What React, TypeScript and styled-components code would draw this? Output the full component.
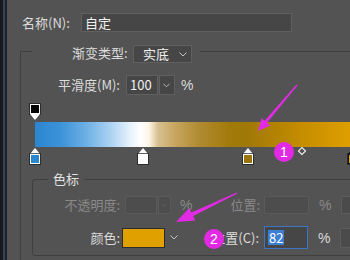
import React from 'react';
import styled, { createGlobalStyle } from 'styled-components';

const GlobalStyle = createGlobalStyle`
  html, body {
    margin: 0;
    padding: 0;
    background: #535353;
  }
  body {
    font-family: "Noto Sans CJK SC", "Liberation Sans", sans-serif;
    font-size: 13px;
    line-height: 16px;
    color: #dcdcdc;
    overflow: hidden;
  }
`;

const MAGENTA = '#e22ae4';
const LINE = '#3f3f3f';

const Screen = styled.div`
  position: relative;
  width: 350px;
  height: 260px;
  display: flex;
  overflow: hidden;
  background: #535353;
`;

const WindowEdge = styled.div`
  flex: none;
  width: 2px;
  background: #33475b;
  border-left: 3px solid #181a1e;
  border-right: 2px solid #1e2125;
`;

const Panel = styled.div`
  flex: 1;
  min-width: 0;
  display: flex;
  flex-direction: column;
`;

const Row = styled.div<{ $top: number; $left?: number; $h: number }>`
  display: flex;
  align-items: center;
  flex: none;
  height: ${p => p.$h}px;
  margin-top: ${p => p.$top}px;
  padding-left: ${p => p.$left ?? 0}px;
`;

const Label = styled.span<{ $w: number; $right?: boolean; $dim?: boolean; $gap?: number }>`
  flex: none;
  width: ${p => p.$w}px;
  margin-left: ${p => p.$gap ?? 0}px;
  padding-right: ${p => (p.$right ? 1 : 0)}px;
  box-sizing: border-box;
  text-align: ${p => (p.$right ? 'right' : 'left')};
  color: ${p => (p.$dim ? '#8a8a8a' : '#dcdcdc')};
  white-space: nowrap;
`;

const Field = styled.div<{ $w: number; $h: number; $gap?: number; $focus?: boolean; $dim?: boolean; $pad?: number }>`
  flex: none;
  display: flex;
  align-items: center;
  justify-content: space-between;
  box-sizing: border-box;
  width: ${p => p.$w}px;
  height: ${p => p.$h}px;
  margin-left: ${p => p.$gap ?? 0}px;
  padding: 0 4px 0 ${p => p.$pad ?? 3}px;
  background: ${p => (p.$dim ? '#4d4d4d' : '#464646')};
  border: 1px solid ${p => (p.$focus ? '#3a76c6' : p.$dim ? '#5a5a5a' : '#606060')};
  color: #f0f0f0;
  white-space: nowrap;
`;

const Selected = styled.span`
  background: #3a7fd2;
  color: #ffffff;
  padding: 0 1px;
  line-height: 15px;
`;

const Unit = styled.span<{ $gap: number; $dim?: boolean }>`
  flex: none;
  width: 12px;
  margin-left: ${p => p.$gap}px;
  color: ${p => (p.$dim ? '#8a8a8a' : '#dcdcdc')};
  font-family: "Liberation Sans", sans-serif;
  font-size: 14px;
`;

const Swatch = styled.div<{ $color: string }>`
  flex: none;
  width: 43px;
  height: 20px;
  margin-left: 1px;
  box-sizing: border-box;
  background: ${p => p.$color};
  border: 1px solid #2c2c2c;
`;

const ChevronCell = styled.div<{ $w: number; $gap: number }>`
  flex: none;
  display: flex;
  align-items: center;
  justify-content: center;
  width: ${p => p.$w}px;
  margin-left: ${p => p.$gap}px;
`;

const TypeGroup = styled.div`
  flex: 1;
  display: flex;
  flex-direction: column;
  margin: 13px 0 0 13px;
  min-width: 0;
`;

const GroupHead = styled.div`
  flex: none;
  display: flex;
  height: 18px;
`;

const Corner = styled.div`
  flex: none;
  width: 11px;
  height: 11px;
  margin-top: 6px;
  border-top: 1px solid ${LINE};
  border-left: 1px solid ${LINE};
`;

const HeadRule = styled.div`
  flex: 1;
  margin: 6px 0 0 8px;
  height: 0;
  border-top: 1px solid ${LINE};
`;

const GroupBody = styled.div`
  flex: 1;
  display: flex;
  flex-direction: column;
  border-left: 1px solid ${LINE};
`;

const Slider = styled.div`
  flex: none;
  display: flex;
  flex-direction: column;
  width: 318px;
  margin: 9px 0 0 14px;
`;

const Track = styled.div<{ $h: number }>`
  position: relative;
  height: ${p => p.$h}px;
`;

const GradientBar = styled.div`
  height: 25px;
  margin-top: 2px;
  background: linear-gradient(
    to right,
    #2b86d0 0px,
    #3c92d8 25px,
    #6aaee4 50px,
    #aad2f2 75px,
    #e6f2fc 95px,
    #ffffff 106px,
    #fdf5e6 114px,
    #d8c090 123px,
    #c6a660 140px,
    #b08a30 165px,
    #a27a0a 195px,
    #a07808 213px,
    #c48c00 265px,
    #e0a000 318px
  );
`;

const Stop = styled.div<{ $pos: number; $down?: boolean }>`
  position: absolute;
  left: ${p => p.$pos}%;
  top: ${p => (p.$down ? 0 : 1)}px;
  transform: translateX(-50%);
  display: flex;
  flex-direction: ${p => (p.$down ? 'column-reverse' : 'column')};
  align-items: center;
`;

const Tip = styled.div<{ $down?: boolean; $dark?: boolean }>`
  width: 0;
  height: 0;
  border-left: 5px solid transparent;
  border-right: 5px solid transparent;
  ${p => (p.$down ? 'border-top' : 'border-bottom')}: 6px solid ${p => (p.$dark ? '#111' : '#fff')};
`;

const StopBox = styled.div<{ $fill: string; $dark?: boolean }>`
  width: 10px;
  height: 10px;
  box-sizing: border-box;
  background: ${p => p.$fill};
  border: 1px solid ${p => (p.$dark ? '#111' : '#fff')};
  box-shadow: 0 0 0 1px rgba(30, 30, 30, 0.7);
`;

const Midpoint = styled.div<{ $pos: number }>`
  position: absolute;
  left: ${p => p.$pos}%;
  top: 1px;
  width: 4px;
  height: 4px;
  border: 1px solid #ffffff;
  transform: translateX(-50%) rotate(45deg);
`;

const StopGroup = styled.fieldset`
  flex: none;
  width: 340px;
  margin: 6px 0 0 11px;
  padding: 9px 0 6px 0;
  border: 1px solid ${LINE};
  border-radius: 3px;
  min-width: 0;
`;

const GroupTitle = styled.legend`
  margin-left: 15px;
  padding: 0 5px;
  line-height: 16px;
  color: #e2e2e2;
`;

const SideBox = styled.div<{ $h: number; $gap: number }>`
  flex: none;
  width: 30px;
  height: ${p => p.$h}px;
  margin-left: ${p => p.$gap}px;
  box-sizing: border-box;
  background: #4b4b4b;
  border: 1px solid #5c5c5c;
`;

const Notes = styled.svg`
  position: absolute;
  left: 0;
  top: 0;
  pointer-events: none;
`;

const Badge = styled.div<{ $x: number; $y: number }>`
  position: absolute;
  left: ${p => p.$x - 10}px;
  top: ${p => p.$y - 10}px;
  width: 20px;
  height: 20px;
  border-radius: 50%;
  background: ${MAGENTA};
  color: #ffffff;
  font-family: "Liberation Sans", sans-serif;
  font-size: 14px;
  line-height: 20px;
  text-align: center;
`;

const Chevron = ({ dim }: { dim?: boolean }) => (
  <svg width="8" height="5" viewBox="0 0 8 5">
    <polyline
      points="0.5,0.5 4,4 7.5,0.5"
      fill="none"
      stroke={dim ? '#6e6e6e' : '#c4c4c4'}
      strokeWidth="1"
    />
  </svg>
);

// positions in % of the gradient bar
const colorStops = [
  { pos: 0, fill: '#2b86d0' },
  { pos: 34, fill: '#ffffff' },
  { pos: 67, fill: '#9c740a' },
  { pos: 100, fill: '#e0a000', dark: true },
];

export default function App() {
  return (
    <Screen>
      <GlobalStyle />
      <WindowEdge />
      <Panel>
        <Row $top={13} $left={15} $h={19}>
          <Label $w={59}>名称(N):</Label>
          <Field $w={211} $h={19}>自定</Field>
        </Row>

        <TypeGroup>
          <GroupHead>
            <Corner />
            <Label $w={55} $gap={40}>渐变类型:</Label>
            <Field $w={59} $h={18} $gap={6} $pad={9}>
              实底
              <Chevron />
            </Field>
            <HeadRule />
          </GroupHead>

          <GroupBody>
            <Row $top={12} $left={37} $h={20}>
              <Label $w={68}>平滑度(M):</Label>
              <Field $w={32} $h={20}>100</Field>
              <Field $w={16} $h={20} $gap={1} $pad={3}>
                <Chevron />
              </Field>
              <Unit $gap={6}>%</Unit>
            </Row>

            <Slider>
              <Track $h={16}>
                <Stop $pos={0} $down>
                  <Tip $down />
                  <StopBox $fill="#000000" />
                </Stop>
              </Track>
              <GradientBar />
              <Track $h={18}>
                {colorStops.map(s => (
                  <Stop key={s.pos} $pos={s.pos}>
                    <Tip $dark={s.dark} />
                    <StopBox $fill={s.fill} $dark={s.dark} />
                  </Stop>
                ))}
                <Midpoint $pos={84} />
              </Track>
            </Slider>

            <StopGroup>
              <GroupTitle>色标</GroupTitle>
              <Row $top={0} $h={18}>
                <Label $w={88} $right $dim>不透明度:</Label>
                <Field $w={32} $h={18} $gap={4} $dim />
                <Field $w={13} $h={18} $gap={1} $pad={2} $dim>
                  <Chevron dim />
                </Field>
                <Unit $gap={9} $dim>%</Unit>
                <Label $w={69} $right $dim>位置:</Label>
                <Field $w={45} $h={18} $gap={3} $dim />
                <Unit $gap={10} $dim>%</Unit>
                <SideBox $h={18} $gap={10} />
              </Row>
              <Row $top={12} $h={23}>
                <Label $w={88} $right>颜色:</Label>
                <Swatch $color="#e0a000" />
                <ChevronCell $w={8} $gap={5}>
                  <Chevron />
                </ChevronCell>
                <Label $w={82} $right>位置(C):</Label>
                <Field $w={44} $h={23} $gap={4} $focus>
                  <Selected>82</Selected>
                </Field>
                <Unit $gap={10}>%</Unit>
                <SideBox $h={20} $gap={10} />
              </Row>
            </StopGroup>
          </GroupBody>
        </TypeGroup>
      </Panel>

      <Notes width="350" height="260" viewBox="0 0 350 260">
        <polygon
          fill={MAGENTA}
          points="297.5,85.4 267,122.8 270,125.4 258,131 261.6,118.2 264.6,120.8 296.5,84.6"
        />
        <polygon
          fill={MAGENTA}
          points="237.3,193.5 193.2,216.1 195.3,220.6 176,222 189.3,208 191.4,212.5 236.7,192.5"
        />
      </Notes>
      <Badge $x={284} $y={152}>1</Badge>
      <Badge $x={214} $y={239}>2</Badge>
    </Screen>
  );
}
